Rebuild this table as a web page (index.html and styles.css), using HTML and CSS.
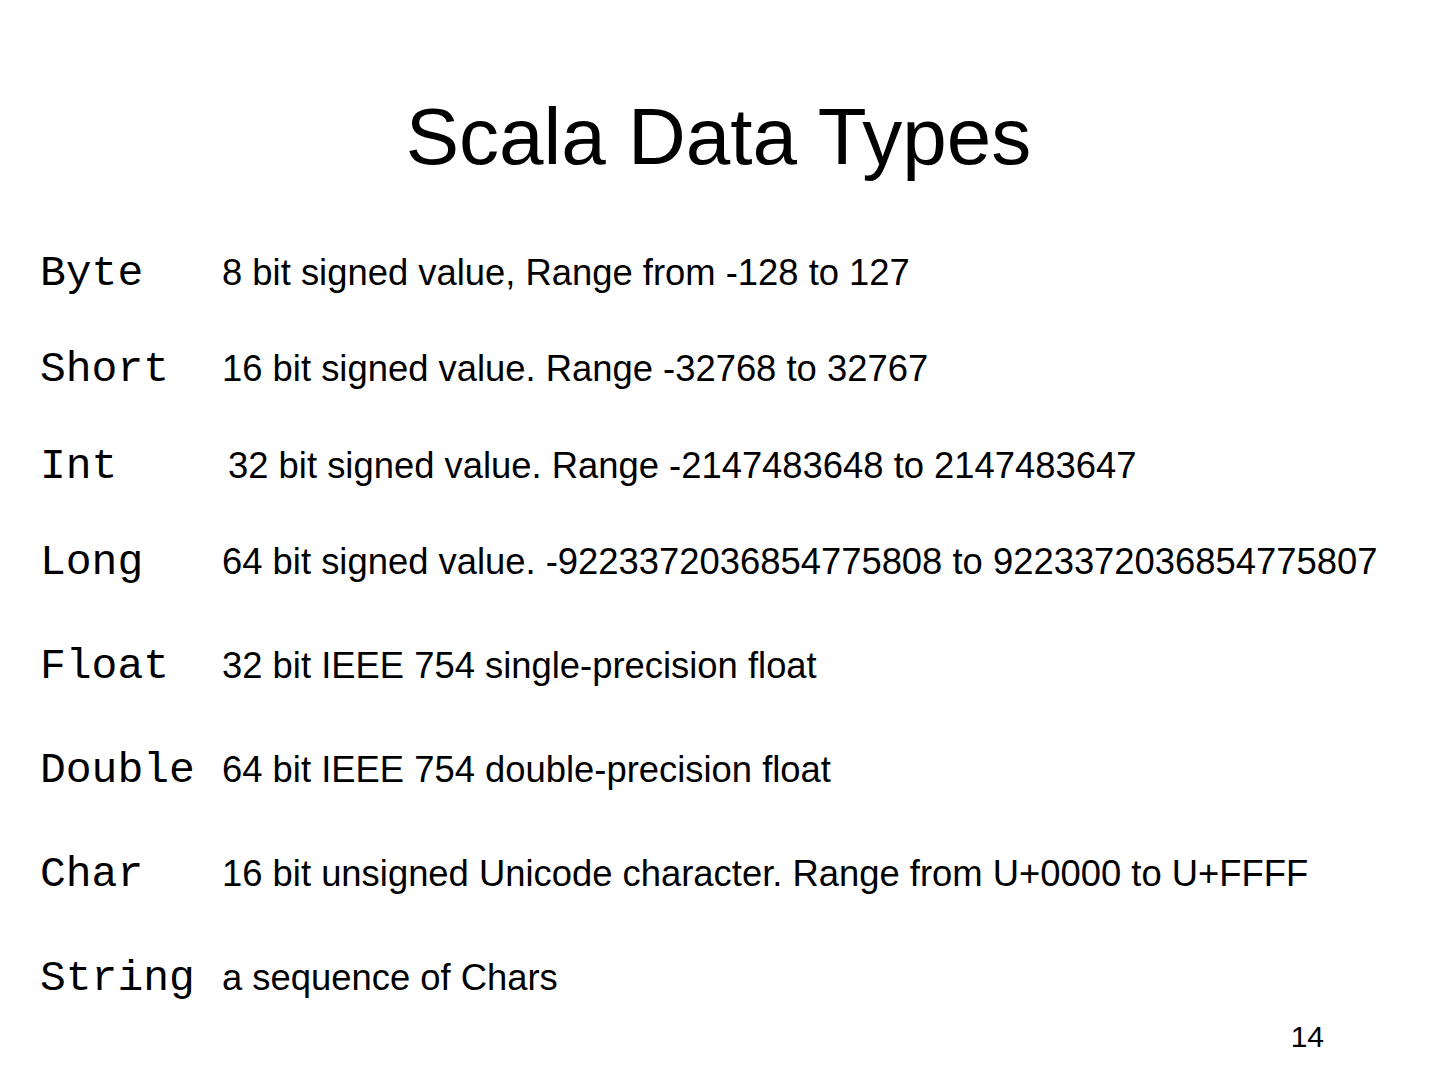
FILE: index.html
```html
<!DOCTYPE html>
<html lang="en">
<head>
<meta charset="utf-8">
<title>Scala Data Types</title>
<link rel="stylesheet" href="styles.css">
</head>
<body>
<div class="slide">
  <h1 class="title">Scala Data Types</h1>
  <div class="rows">
    <div class="row"><span class="type">Byte</span><span class="desc">8 bit signed value, Range from -128 to 127</span></div>
    <div class="row row-mid"><span class="type">Short</span><span class="desc">16 bit signed value. Range -32768 to 32767</span></div>
    <div class="row"><span class="type">Int</span><span class="desc desc-indent">32 bit signed value. Range -2147483648 to 2147483647</span></div>
    <div class="row row-tall"><span class="type">Long</span><span class="desc">64 bit signed value. -9223372036854775808 to 9223372036854775807</span></div>
    <div class="row row-tall"><span class="type">Float</span><span class="desc">32 bit IEEE 754 single-precision float</span></div>
    <div class="row row-taller"><span class="type">Double</span><span class="desc">64 bit IEEE 754 double-precision float</span></div>
    <div class="row row-tall"><span class="type">Char</span><span class="desc">16 bit unsigned Unicode character. Range from U+0000 to U+FFFF</span></div>
    <div class="row row-last"><span class="type">String</span><span class="desc">a sequence of Chars</span></div>
  </div>
  <div class="footer"><span class="page-num">14</span></div>
</div>
</body>
</html>
```
FILE: styles.css
```css
html, body {
  margin: 0;
  padding: 0;
  background: #ffffff;
}

.slide {
  width: 1440px;
  height: 1083px;
  box-sizing: border-box;
  padding-top: 91px;
  display: flex;
  flex-direction: column;
  color: #000000;
  font-family: "Liberation Sans", Arial, sans-serif;
}

.title {
  margin: 0;
  font-size: 80px;
  font-weight: normal;
  line-height: normal;
  text-align: center;
  padding-right: 3px;
}

.rows {
  margin-top: 66px;
  padding-left: 40px;
  display: flex;
  flex-direction: column;
}

.row {
  display: flex;
  align-items: baseline;
  height: 96px;
}

.row-mid {
  height: 96.5px;
}

.row-tall {
  height: 104px;
}

.row-taller {
  height: 104.5px;
}

.row-last {
  height: 50px;
}

.type {
  font-family: "Liberation Mono", "Courier New", monospace;
  font-size: 43px;
  line-height: normal;
  width: 182px;
  flex: none;
}

.desc {
  font-size: 36.4px;
  line-height: normal;
  white-space: nowrap;
}

.desc-indent {
  padding-left: 6px;
}

.footer {
  margin-top: 16px;
  display: flex;
  justify-content: flex-end;
  padding-right: 116px;
}

.page-num {
  font-size: 30px;
  line-height: normal;
}
```
